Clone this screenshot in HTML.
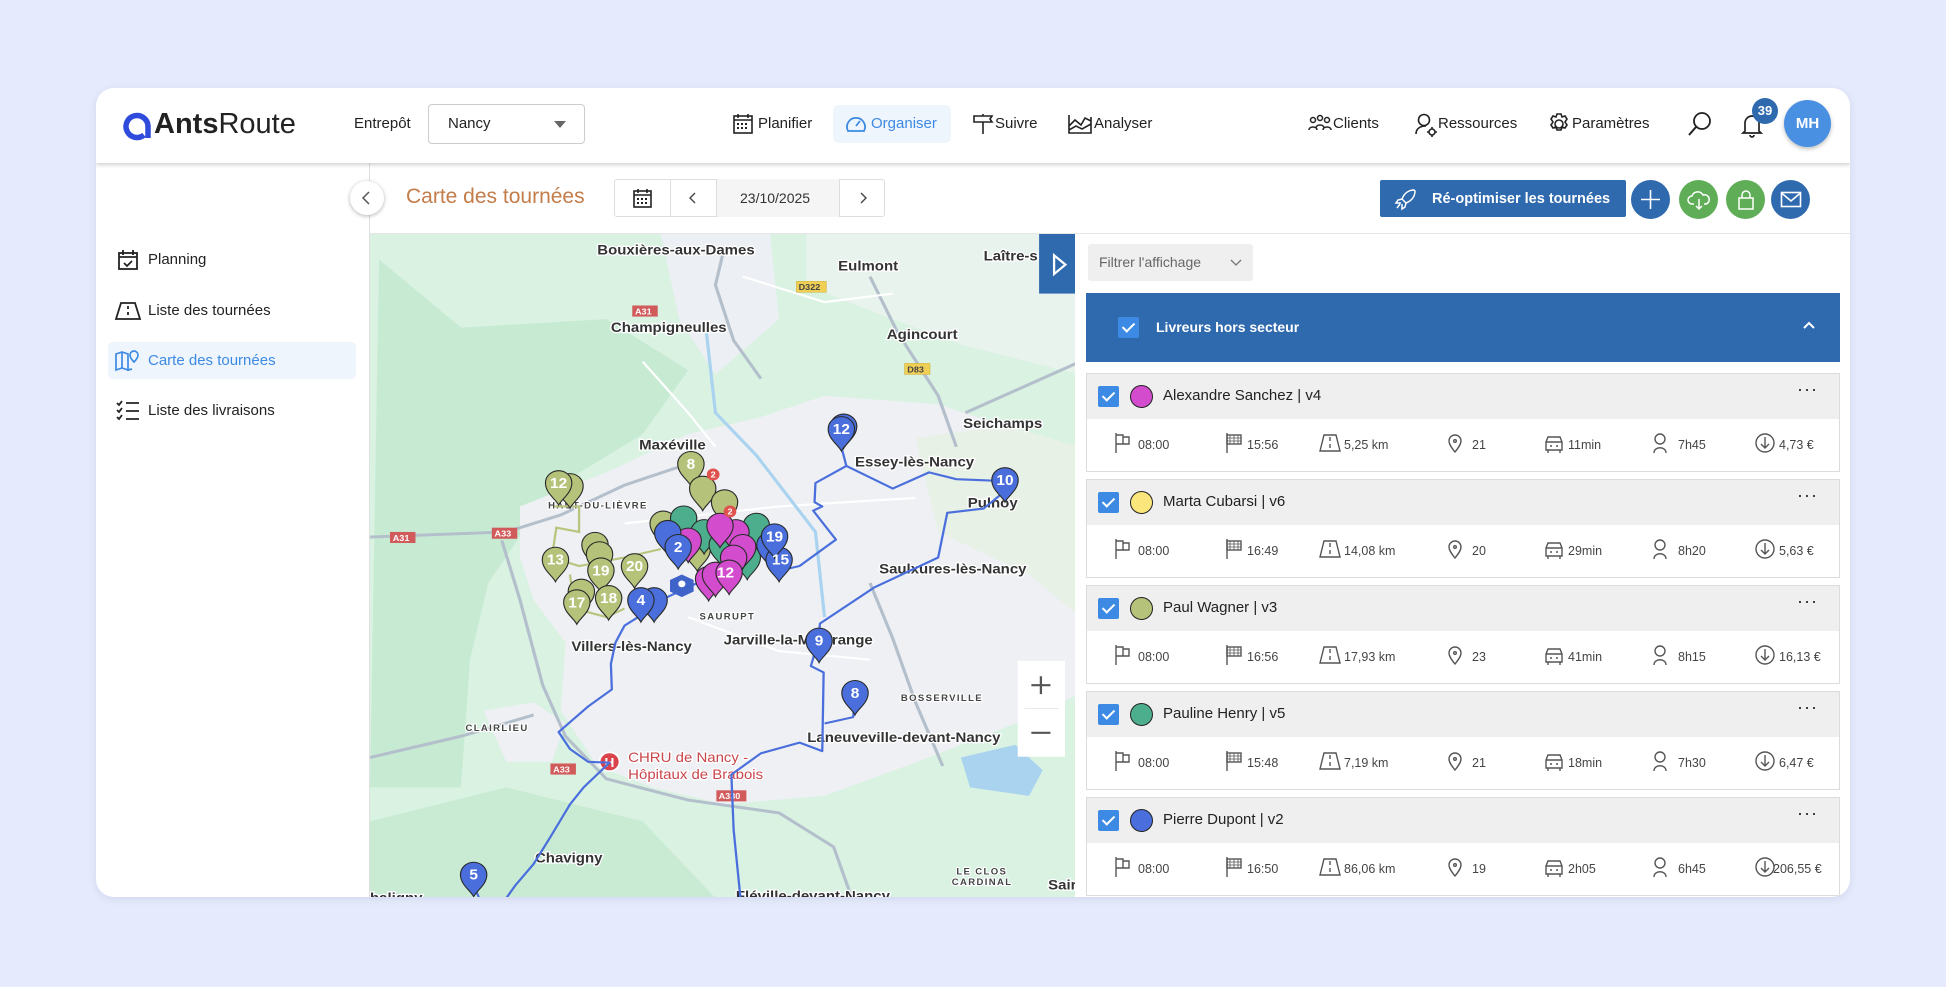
<!DOCTYPE html>
<html><head><meta charset="utf-8"><style>
*{box-sizing:border-box;margin:0;padding:0}
body{width:1946px;height:987px;background:#e5eafc;font-family:"Liberation Sans",sans-serif;color:#222;position:relative;overflow:hidden}
.abs{position:absolute}
.card{position:absolute;left:96px;top:88px;width:1754px;height:809px;background:#fff;border-radius:18px;overflow:hidden;box-shadow:0 2px 8px rgba(80,90,140,.12)}
.hdr{position:absolute;left:0;top:0;width:1754px;height:75px;background:#fff;box-shadow:0 2px 4px rgba(0,0,0,.18);z-index:5}
.t{position:absolute;white-space:nowrap}
.nav{font-size:15px;color:#222}
.side{font-size:15px;color:#222}
.rc{position:absolute;left:990px;width:754px;height:99px;border:1px solid #dcdcdc;background:#fff}
.rch{height:45px;background:#efefef;position:relative}
.cb{position:absolute;width:21px;height:21px;background:#3d8ae4;border-radius:2px}
.cb:after{content:"";position:absolute;left:7px;top:3px;width:5px;height:10px;border:solid #fff;border-width:0 2px 2px 0;transform:rotate(45deg)}
.st{position:absolute;top:64px;font-size:12.5px;color:#444;white-space:nowrap}
.circ{position:absolute;width:39px;height:39px;border-radius:50%;top:92px}
</style></head><body>
<div class="card">
 <div class="hdr">
  <svg class="abs" style="left:26px;top:23px" width="30" height="30" viewBox="0 0 30 30"><path d="M22 24 A11 11 0 1 1 26 15 L26 27" fill="none" stroke="#2e4bdc" stroke-width="5.5"/></svg>
  <div class="t" style="left:58px;top:20px;font-size:29px;color:#222"><b>Ants</b>Route</div>
  <div class="t nav" style="left:258px;top:27px">Entrepôt</div>
  <div class="abs" style="left:332px;top:16px;width:157px;height:40px;border:1px solid #ccc;border-radius:4px"></div>
  <div class="t nav" style="left:352px;top:27px">Nancy</div>
  <div class="abs" style="left:458px;top:33px;width:0;height:0;border-left:6px solid transparent;border-right:6px solid transparent;border-top:7px solid #666"></div>
  <svg class="abs" style="left:637px;top:25px" width="20" height="21" viewBox="0 0 20 21"><rect x="1" y="3" width="18" height="17" fill="none" stroke="#222" stroke-width="1.6"/><path d="M1 7h18M5 1v4M15 1v4" stroke="#222" stroke-width="1.6"/><g fill="#222"><rect x="4" y="10" width="2" height="2"/><rect x="8" y="10" width="2" height="2"/><rect x="12" y="10" width="2" height="2"/><rect x="4" y="14" width="2" height="2"/><rect x="8" y="14" width="2" height="2"/><rect x="12" y="14" width="2" height="2"/></g></svg>
  <div class="t nav" style="left:662px;top:27px">Planifier</div>
  <div class="abs" style="left:737px;top:17px;width:118px;height:38px;background:#eef5fd;border-radius:5px"></div>
  <svg class="abs" style="left:749px;top:26px" width="22" height="20" viewBox="0 0 22 20"><path d="M3 17 A9 9 0 1 1 19 17 Z" fill="none" stroke="#3d8ae4" stroke-width="1.8"/><path d="M11 12 L15 7" stroke="#3d8ae4" stroke-width="1.8"/></svg>
  <div class="t nav" style="left:775px;top:27px;color:#3d8ae4">Organiser</div>
  <svg class="abs" style="left:876px;top:25px" width="22" height="22" viewBox="0 0 22 22"><path d="M2 3h18l-2 3 2 3H2z M11 9v12 M11 1v2" fill="none" stroke="#222" stroke-width="1.6"/></svg>
  <div class="t nav" style="left:899px;top:27px">Suivre</div>
  <svg class="abs" style="left:972px;top:26px" width="24" height="20" viewBox="0 0 24 20"><path d="M1 1v18h22V3 M1 12l6-6 6 5 4-7 6 3 M1 16l7-4 6 3 9-5" fill="none" stroke="#222" stroke-width="1.6"/></svg>
  <div class="t nav" style="left:998px;top:27px">Analyser</div>
  <svg class="abs" style="left:1212px;top:26px" width="24" height="20" viewBox="0 0 24 20"><g fill="none" stroke="#222" stroke-width="1.5"><circle cx="5" cy="6" r="2.5"/><circle cx="12" cy="4" r="2.5"/><circle cx="19" cy="6" r="2.5"/><path d="M1 16c0-4 8-4 8 0M8 14c0-4 8-4 8 0M15 16c0-4 8-4 8 0"/></g></svg>
  <div class="t nav" style="left:1237px;top:27px">Clients</div>
  <svg class="abs" style="left:1318px;top:24px" width="26" height="26" viewBox="0 0 26 26"><g fill="none" stroke="#222" stroke-width="1.6"><circle cx="10" cy="8" r="5.5"/><path d="M2 22c0-6 5-8 10-8"/><circle cx="18" cy="20" r="3"/><path d="M18 15v2M18 23v2M13 20h2M21 20h2"/></g></svg>
  <div class="t nav" style="left:1342px;top:27px">Ressources</div>
  <svg class="abs" style="left:1451px;top:24px" width="24" height="24" viewBox="0 0 24 24"><g fill="none" stroke="#222" stroke-width="1.6"><circle cx="12" cy="12" r="4"/><path d="M10 2h4l1 3 3-1 2 3-2 3 2 3-2 3-3-1-1 3h-4l-1-3-3 1-2-3 2-3-2-3 2-3 3 1z"/></g></svg>
  <div class="t nav" style="left:1476px;top:27px">Paramètres</div>
  <svg class="abs" style="left:1591px;top:23px" width="26" height="26" viewBox="0 0 26 26"><circle cx="15" cy="10" r="8" fill="none" stroke="#222" stroke-width="1.8"/><path d="M9 16 L2 24" stroke="#222" stroke-width="2"/></svg>
  <svg class="abs" style="left:1645px;top:23px" width="22" height="28" viewBox="0 0 22 28"><path d="M4 20V12a7 7 0 0 1 14 0v8l2 2H2z M9 24a2 2 0 0 0 4 0" fill="none" stroke="#222" stroke-width="1.7"/></svg>
  <div class="abs" style="left:1656px;top:10px;width:26px;height:26px;border-radius:50%;background:#2f69ae;color:#fff;font-size:13px;font-weight:bold;text-align:center;line-height:26px">39</div>
  <div class="abs" style="left:1688px;top:12px;width:47px;height:47px;border-radius:50%;background:#4a90e2;color:#fff;font-size:15px;font-weight:bold;text-align:center;line-height:47px;box-shadow:0 2px 4px rgba(0,0,0,.25)">MH</div>
 </div>
 <div class="abs" style="left:273px;top:75px;width:1px;height:734px;background:#e0e0e0"></div>
 <svg class="abs" style="left:21px;top:161px" width="22" height="22" viewBox="0 0 22 22"><rect x="2" y="4" width="18" height="16" fill="none" stroke="#222" stroke-width="1.8"/><path d="M2 8h18M6 1v5M16 1v5M7 14l3 3 5-5" fill="none" stroke="#222" stroke-width="1.8"/></svg>
 <div class="t side" style="left:52px;top:163px">Planning</div>
 <svg class="abs" style="left:18px;top:213px" width="28" height="20" viewBox="0 0 28 20"><path d="M7 2h14l5 16H2z M14 5v3M14 11v3" fill="none" stroke="#222" stroke-width="1.8"/></svg>
 <div class="t side" style="left:52px;top:214px">Liste des tournées</div>
 <div class="abs" style="left:12px;top:254px;width:248px;height:37px;background:#eef5fd;border-radius:5px"></div>
 <svg class="abs" style="left:18px;top:261px" width="26" height="24" viewBox="0 0 26 24"><path d="M2 5l6-2 6 2 0 16-6-2-6 2z M8 3v16 M14 8v13l4-1" fill="none" stroke="#3d8ae4" stroke-width="1.7"/><path d="M20 13c-3-3-4-5-4-7a4 4 0 0 1 8 0c0 2-1 4-4 7z" fill="none" stroke="#3d8ae4" stroke-width="1.7"/></svg>
 <div class="t side" style="left:52px;top:264px;color:#3d8ae4">Carte des tournées</div>
 <svg class="abs" style="left:20px;top:312px" width="24" height="22" viewBox="0 0 24 22"><path d="M1 3l2 2 3-4M1 10l2 2 3-4M1 17l2 2 3-4 M10 3h13M10 11h13M10 19h13" fill="none" stroke="#222" stroke-width="1.8"/></svg>
 <div class="t side" style="left:52px;top:314px">Liste des livraisons</div>
 <div class="abs" style="left:254px;top:93px;width:34px;height:34px;border-radius:50%;background:#fff;box-shadow:0 1px 4px rgba(0,0,0,.3);z-index:3"></div>
 <svg class="abs" style="left:264px;top:102px;z-index:4" width="12" height="16" viewBox="0 0 12 16"><path d="M9 2L3 8l6 6" fill="none" stroke="#555" stroke-width="1.5"/></svg>
 <div class="t" style="left:310px;top:97px;font-size:21px;color:#c47d4a">Carte des tournées</div>
 <div class="abs" style="left:518px;top:91px;width:271px;height:38px;border:1px solid #ddd;border-radius:3px;background:#fff"></div>
 <div class="abs" style="left:574px;top:91px;width:1px;height:38px;background:#ddd"></div>
 <div class="abs" style="left:620px;top:91px;width:124px;height:38px;background:#f5f5f5;border-left:1px solid #ddd;border-right:1px solid #ddd"></div>
 <svg class="abs" style="left:537px;top:100px" width="19" height="20" viewBox="0 0 19 20"><rect x="1" y="3" width="17" height="16" fill="none" stroke="#222" stroke-width="1.6"/><path d="M1 7h17M5 1v4M14 1v4" stroke="#222" stroke-width="1.6"/><g fill="#222"><rect x="4" y="10" width="2" height="2"/><rect x="8" y="10" width="2" height="2"/><rect x="12" y="10" width="2" height="2"/><rect x="4" y="14" width="2" height="2"/><rect x="8" y="14" width="2" height="2"/><rect x="12" y="14" width="2" height="2"/></g></svg>
 <svg class="abs" style="left:592px;top:104px" width="10" height="12" viewBox="0 0 10 12"><path d="M7 1L2 6l5 5" fill="none" stroke="#444" stroke-width="1.4"/></svg>
 <div class="t" style="left:644px;top:102px;font-size:14px;color:#333">23/10/2025</div>
 <svg class="abs" style="left:762px;top:104px" width="10" height="12" viewBox="0 0 10 12"><path d="M3 1l5 5-5 5" fill="none" stroke="#444" stroke-width="1.4"/></svg>
 <div class="abs" style="left:1284px;top:92px;width:246px;height:37px;background:#2f69ae;border-radius:2px"></div>
 <svg class="abs" style="left:1298px;top:99px" width="24" height="24" viewBox="0 0 24 24"><path d="M20 3c-6 0-10 4-12 9l4 4c5-2 9-6 9-12z M8 12l-4 1-2 3 5 0 M12 16l-1 4-3 2 0-5 M6 17l-3 4" fill="none" stroke="#fff" stroke-width="1.5"/></svg>
 <div class="t" style="left:1336px;top:103px;font-size:14.5px;color:#fff;font-weight:bold">Ré-optimiser les tournées</div>
 <div class="circ" style="left:1535px;background:#2f69ae"></div>
 <svg class="abs" style="left:1543px;top:100px" width="23" height="23" viewBox="0 0 23 23"><path d="M11.5 2v19M2 11.5h19" stroke="#fff" stroke-width="1.6"/></svg>
 <div class="circ" style="left:1583px;background:#5fae57"></div>
 <svg class="abs" style="left:1591px;top:101px" width="24" height="22" viewBox="0 0 24 22"><path d="M7 15H5a4 4 0 0 1 0-8 6 6 0 0 1 11-1 4.5 4.5 0 0 1 3 9h-2 M12 10v10M9 17l3 3 3-3" fill="none" stroke="#fff" stroke-width="1.5"/></svg>
 <div class="circ" style="left:1630px;background:#5fae57"></div>
 <svg class="abs" style="left:1640px;top:101px" width="20" height="22" viewBox="0 0 20 22"><rect x="3" y="9" width="14" height="11" fill="none" stroke="#fff" stroke-width="1.5"/><path d="M6 9V6a4 4 0 0 1 8 0v3" fill="none" stroke="#fff" stroke-width="1.5"/></svg>
 <div class="circ" style="left:1675px;background:#2f69ae"></div>
 <svg class="abs" style="left:1684px;top:103px" width="22" height="17" viewBox="0 0 22 17"><rect x="1.5" y="1.5" width="19" height="14" fill="none" stroke="#fff" stroke-width="1.6"/><path d="M1.5 2l9.5 8 9.5-8" fill="none" stroke="#fff" stroke-width="1.6"/></svg>
 <div class="abs" style="left:274px;top:145px;width:1480px;height:1px;background:#e6e6e6"></div>

 <div class="abs" style="left:274px;top:146px;width:705px;height:663px;overflow:hidden;background:#d8f1e0">
 <svg width="710" height="664" viewBox="0 0 1562 1560" preserveAspectRatio="none" style="position:absolute;left:0;top:0" font-family="Liberation Sans, sans-serif">
  <defs>
   <path id="pin" d="M0 52 C-6 38 -29 24 -29 0 A29 29 0 1 1 29 0 C29 24 6 38 0 52Z"/>
  </defs>
  <path d="M0 0 H1562 V1560 H0Z" fill="#d9f2e2"/>
  <path d="M20 60 L200 220 L520 200 L700 320 L600 470 L400 600 L260 820 L220 1000 L200 1300 L0 1300Z" fill="#c7ead3"/>
  <path d="M0 1380 L300 1300 L600 1380 L760 1560 L0 1560Z" fill="#c9ebd4"/>
  <path d="M640 0 L880 0 L900 200 L760 330 L680 200Z" fill="#eceff3"/>
  <path d="M960 0 L1562 0 L1562 330 L1300 260 L1100 180 L960 120Z" fill="#e9f3ee"/>
  <path d="M330 640 L520 560 L700 470 L860 430 L1000 380 L1250 400 L1450 470 L1562 520 L1562 1080 L1420 1150 L1230 1230 L1000 1320 L780 1340 L620 1300 L500 1250 L420 1120 L430 960 L360 860 L330 760Z" fill="#eef0f4"/>
  <path d="M1200 480 L1400 450 L1562 500 L1562 900 L1450 800 L1250 700Z" fill="#e8f1e6"/>
  <path d="M250 1120 L360 1100 L430 1150 L400 1240 L300 1240Z" fill="#eef0f4"/>
  <path d="M1300 1230 L1420 1200 L1480 1260 L1450 1320 L1320 1300Z" fill="#a9d3ef"/>
  <g fill="none" stroke="#b4bfcc" stroke-width="7">
   <path d="M0 712 L300 700 L420 660 L560 590 L700 540"/>
   <path d="M290 720 L330 860 L380 1060 L430 1180 L520 1280 L700 1330 L900 1360 L1020 1440 L1060 1560"/>
   <path d="M780 30 L760 120 L800 250 L860 340"/>
   <path d="M1100 100 L1160 230 L1250 380 L1290 500"/>
   <path d="M1310 420 L1562 300"/>
   <path d="M1100 820 L1150 950 L1200 1100 L1260 1250"/>
   <path d="M0 1230 L200 1180 L360 1130"/>
  </g>
  <g fill="none" stroke="#fff" stroke-width="5">
   <path d="M560 680 L900 640 L1200 620"/>
   <path d="M700 900 L900 980 L1100 1000"/>
   <path d="M820 100 L1000 160 L1150 140"/>
   <path d="M600 300 L700 420 L760 500"/>
  </g>
  <path d="M740 230 L760 420 L850 520 L980 700 L1000 900" fill="none" stroke="#a9d3ef" stroke-width="7"/>
  <g font-size="20" font-weight="bold" fill="#fff">
   <rect x="577" y="168" width="56" height="26" fill="#d15a5a"/><text x="583" y="189">A31</text>
   <rect x="44" y="700" width="56" height="26" fill="#d15a5a"/><text x="50" y="721">A31</text>
   <rect x="268" y="690" width="56" height="26" fill="#d15a5a"/><text x="274" y="711">A33</text>
   <rect x="397" y="1244" width="56" height="26" fill="#d15a5a"/><text x="403" y="1265">A33</text>
   <rect x="762" y="1307" width="66" height="26" fill="#d15a5a"/><text x="767" y="1328">A330</text>
   <rect x="938" y="111" width="66" height="26" fill="#f0cf55" stroke="#c9a830"/><text x="943" y="132" fill="#444">D322</text>
   <rect x="1176" y="304" width="56" height="26" fill="#f0cf55" stroke="#c9a830"/><text x="1182" y="325" fill="#444">D83</text>
  </g>
  <g font-size="33" fill="#333" stroke="#fff" stroke-width="6" paint-order="stroke" font-weight="600">
   <text x="500" y="48">Bouxières-aux-Dames</text>
   <text x="1030" y="86">Eulmont</text>
   <text x="1350" y="62">Laître-s</text>
   <text x="530" y="230">Champigneulles</text>
   <text x="1137" y="247">Agincourt</text>
   <text x="1305" y="456">Seichamps</text>
   <text x="592" y="506">Maxéville</text>
   <text x="1067" y="546">Essey-lès-Nancy</text>
   <text x="1315" y="642">Pulnoy</text>
   <text x="1120" y="798">Saulxures-lès-Nancy</text>
   <text x="443" y="980">Villers-lès-Nancy</text>
   <text x="778" y="965">Jarville-la-Malgrange</text>
   <text x="962" y="1194">Laneuveville-devant-Nancy</text>
   <text x="363" y="1477">Chavigny</text>
   <text x="805" y="1566">Fléville-devant-Nancy</text>
   <text x="1492" y="1540">Sair</text>
   <text x="0" y="1570">haligny</text>
  </g>
  <g font-size="21" fill="#444" stroke="#fff" stroke-width="5" paint-order="stroke" letter-spacing="3" font-weight="600">
   <text x="392" y="645">HAUT-DU-LIÈVRE</text>
   <text x="725" y="906">SAURUPT</text>
   <text x="1168" y="1097">BOSSERVILLE</text>
   <text x="210" y="1168">CLAIRLIEU</text>
   <text x="1290" y="1505">LE CLOS</text>
   <text x="1280" y="1530">CARDINAL</text>
  </g>
  <g font-size="33" fill="#c9464b" stroke="#fff" stroke-width="6" paint-order="stroke">
   <text x="568" y="1240">CHRU de Nancy -</text>
   <text x="568" y="1280">Hôpitaux de Brabois</text>
  </g>
  <circle cx="527" cy="1240" r="22" fill="#d9434b" stroke="#fff" stroke-width="4"/>
  <text x="516" y="1252" font-size="30" font-weight="bold" fill="#fff">H</text>
  <path d="M405 640 L460 640 L460 700 L410 690 L400 760 L460 780 L560 760 L640 740 M440 800 L450 880 L520 900 L560 880" fill="none" stroke="#b9c47e" stroke-width="5"/>
  <g fill="none" stroke="#4a6fdc" stroke-width="5" stroke-linejoin="round">
   <path d="M1037 500 L1048 545 L1100 572 L1150 598 L1230 560 L1290 576 L1380 580 M1048 545 L980 585 L978 630 L995 640 L975 650 L1025 718 L945 780 L905 790 L880 790"/>
   <path d="M1390 610 L1350 645 L1270 655 L1250 760 L1110 830 L990 915 L985 960 L970 1015 L998 1030 L995 1215 L945 1195 L860 1220 L795 1270 L800 1400 L815 1560"/>
   <path d="M1065 1110 L1063 1135 L1000 1150"/>
   <path d="M620 880 L560 920 L540 960 L530 1010 L532 1070 L480 1110 L415 1170 L440 1210 L480 1240 L527 1242 L470 1300 L440 1340 L395 1420 L360 1480 L320 1530 L300 1560"/>
   <path d="M640 860 L720 820 L800 790"/>
   <path d="M228 1530 L240 1560"/>
  </g>
  <g stroke="#2a2a2a" stroke-width="2.5">
   <g fill="#b5c27a">
    <use href="#pin" x="440" y="592"/><use href="#pin" x="415" y="585"/>
    <use href="#pin" x="408" y="765"/><use href="#pin" x="495" y="730"/><use href="#pin" x="505" y="752"/>
    <use href="#pin" x="508" y="790"/><use href="#pin" x="582" y="780"/>
    <use href="#pin" x="465" y="840"/><use href="#pin" x="455" y="865"/><use href="#pin" x="525" y="855"/>
    <use href="#pin" x="706" y="540"/><use href="#pin" x="732" y="598"/><use href="#pin" x="780" y="630"/><use href="#pin" x="645" y="680"/><use href="#pin" x="720" y="740"/>
   </g>
   <g fill="#4cae8c">
    <use href="#pin" x="690" y="668"/><use href="#pin" x="735" y="700"/><use href="#pin" x="850" y="685"/><use href="#pin" x="775" y="730"/><use href="#pin" x="830" y="760"/>
   </g>
   <g fill="#d34ccd">
    <use href="#pin" x="700" y="720"/><use href="#pin" x="805" y="700"/><use href="#pin" x="820" y="735"/><use href="#pin" x="800" y="760"/>
    <use href="#pin" x="745" y="810"/><use href="#pin" x="760" y="800"/><use href="#pin" x="790" y="795"/><use href="#pin" x="770" y="685"/>
   </g>
   <g fill="#4a6fdc">
    <use href="#pin" x="655" y="702"/><use href="#pin" x="678" y="735"/>
    <use href="#pin" x="625" y="860"/><use href="#pin" x="596" y="860"/>
    <use href="#pin" x="880" y="730"/><use href="#pin" x="900" y="765"/><use href="#pin" x="890" y="710"/>
    <use href="#pin" x="1042" y="452"/><use href="#pin" x="1037" y="458"/>
    <use href="#pin" x="1397" y="578"/><use href="#pin" x="988" y="955"/><use href="#pin" x="1067" y="1078"/><use href="#pin" x="228" y="1505"/>
   </g>
  </g>
  <path d="M686 800 L712 813 L712 840 L686 853 L660 840 L660 813Z" fill="#3f63c9"/>
  <circle cx="686" cy="822" r="8" fill="#fff"/>
  <g font-size="34" fill="#fff" font-weight="600" text-anchor="middle">
   <text x="415" y="597">12</text><text x="408" y="777">13</text><text x="508" y="802">19</text><text x="582" y="792">20</text>
   <text x="455" y="877">17</text><text x="525" y="867">18</text><text x="706" y="552">8</text>
   <text x="678" y="747">2</text><text x="596" y="872">4</text><text x="890" y="722">19</text><text x="903" y="777">15</text>
   <text x="1037" y="470">12</text><text x="1397" y="590">10</text><text x="988" y="967">9</text><text x="1067" y="1090">8</text><text x="228" y="1517">5</text>
   <text x="782" y="807">12</text>
  </g>
  <g fill="#e0524e"><circle cx="755" cy="565" r="14"/><circle cx="792" cy="652" r="14"/></g>
  <g font-size="20" fill="#fff" font-weight="bold" text-anchor="middle"><text x="755" y="572">2</text><text x="792" y="659">2</text></g>
  <rect x="1472" y="0" width="90" height="140" fill="#2f69ae"/>
  <path d="M1505 50 L1530 72 L1505 94Z" fill="none" stroke="#fff" stroke-width="5"/>
  <rect x="1425" y="1003" width="104" height="225" fill="#fff"/>
  <path d="M1440 1115 H1514" stroke="#e5e5e5" stroke-width="2"/>
  <path d="M1455 1060 H1497 M1476 1039 V1081 M1455 1172 H1497" stroke="#555" stroke-width="5"/>
 </svg>
 </div>

 <div class="abs" style="left:992px;top:156px;width:165px;height:37px;background:#efefef;border-radius:3px"></div>
 <div class="t" style="left:1003px;top:166px;font-size:14px;color:#666">Filtrer l'affichage</div>
 <svg class="abs" style="left:1134px;top:171px" width="12" height="8" viewBox="0 0 12 8"><path d="M1 1l5 5 5-5" fill="none" stroke="#777" stroke-width="1.3"/></svg>
 <div class="abs" style="left:990px;top:205px;width:754px;height:69px;background:#2f69ae"></div>
 <div class="cb" style="left:1022px;top:229px"></div>
 <div class="t" style="left:1060px;top:231px;font-size:14px;color:#fff;font-weight:bold">Livreurs hors secteur</div>
 <svg class="abs" style="left:1706px;top:232px" width="14" height="10" viewBox="0 0 14 10"><path d="M2 8l5-5 5 5" fill="none" stroke="#fff" stroke-width="2"/></svg>

 <div class="rc" style="top:285px">
  <div class="rch"><div class="cb" style="left:11px;top:12px"></div><div class="abs" style="left:43px;top:11px;width:23px;height:23px;border-radius:50%;background:#d34ccd;border:1.5px solid #222"></div><div class="t" style="left:76px;top:13px;font-size:15px">Alexandre Sanchez | v4</div><div class="t" style="left:710px;top:5px;font-size:18px;letter-spacing:1px">···</div></div>
  <div class="st" style="left:51px">08:00</div><div class="st" style="left:160px">15:56</div><div class="st" style="left:257px">5,25 km</div><div class="st" style="left:385px">21</div><div class="st" style="left:481px">11min</div><div class="st" style="left:591px">7h45</div><div class="st" style="left:692px">4,73 €</div>
 </div>
 <div class="rc" style="top:391px">
  <div class="rch"><div class="cb" style="left:11px;top:12px"></div><div class="abs" style="left:43px;top:11px;width:23px;height:23px;border-radius:50%;background:#fbe67c;border:1.5px solid #222"></div><div class="t" style="left:76px;top:13px;font-size:15px">Marta Cubarsi | v6</div><div class="t" style="left:710px;top:5px;font-size:18px;letter-spacing:1px">···</div></div>
  <div class="st" style="left:51px">08:00</div><div class="st" style="left:160px">16:49</div><div class="st" style="left:257px">14,08 km</div><div class="st" style="left:385px">20</div><div class="st" style="left:481px">29min</div><div class="st" style="left:591px">8h20</div><div class="st" style="left:692px">5,63 €</div>
 </div>
 <div class="rc" style="top:497px">
  <div class="rch"><div class="cb" style="left:11px;top:12px"></div><div class="abs" style="left:43px;top:11px;width:23px;height:23px;border-radius:50%;background:#b5c27a;border:1.5px solid #222"></div><div class="t" style="left:76px;top:13px;font-size:15px">Paul Wagner | v3</div><div class="t" style="left:710px;top:5px;font-size:18px;letter-spacing:1px">···</div></div>
  <div class="st" style="left:51px">08:00</div><div class="st" style="left:160px">16:56</div><div class="st" style="left:257px">17,93 km</div><div class="st" style="left:385px">23</div><div class="st" style="left:481px">41min</div><div class="st" style="left:591px">8h15</div><div class="st" style="left:692px">16,13 €</div>
 </div>
 <div class="rc" style="top:603px">
  <div class="rch"><div class="cb" style="left:11px;top:12px"></div><div class="abs" style="left:43px;top:11px;width:23px;height:23px;border-radius:50%;background:#4cae8c;border:1.5px solid #222"></div><div class="t" style="left:76px;top:13px;font-size:15px">Pauline Henry | v5</div><div class="t" style="left:710px;top:5px;font-size:18px;letter-spacing:1px">···</div></div>
  <div class="st" style="left:51px">08:00</div><div class="st" style="left:160px">15:48</div><div class="st" style="left:257px">7,19 km</div><div class="st" style="left:385px">21</div><div class="st" style="left:481px">18min</div><div class="st" style="left:591px">7h30</div><div class="st" style="left:692px">6,47 €</div>
 </div>
 <div class="rc" style="top:709px">
  <div class="rch"><div class="cb" style="left:11px;top:12px"></div><div class="abs" style="left:43px;top:11px;width:23px;height:23px;border-radius:50%;background:#4a6fdc;border:1.5px solid #222"></div><div class="t" style="left:76px;top:13px;font-size:15px">Pierre Dupont | v2</div><div class="t" style="left:710px;top:5px;font-size:18px;letter-spacing:1px">···</div></div>
  <div class="st" style="left:51px">08:00</div><div class="st" style="left:160px">16:50</div><div class="st" style="left:257px">86,06 km</div><div class="st" style="left:385px">19</div><div class="st" style="left:481px">2h05</div><div class="st" style="left:591px">6h45</div><div class="st" style="left:686px">206,55 €</div>
 </div>
</div>
<svg class="abs" style="left:0;top:0;pointer-events:none" width="1946" height="987">
 <defs>
  <g id="ic" fill="none" stroke="#555" stroke-width="1.4">
   <path d="M2 0v20 M2 2h7v9H2 M9 4h6v7H9"/>
   <g transform="translate(111,0)"><path d="M2 0v20"/><rect x="2" y="2" width="14" height="9"/><path d="M5 2v9M9 2v9M13 2v9M2 5h14M2 8h14" stroke-width=".8"/></g>
   <g transform="translate(205,0)"><path d="M5 2h12l4 16H1z M11 4v4M11 11v4"/></g>
   <g transform="translate(334,0)"><path d="M7 19c-4-5-6-8-6-11a6 6 0 0 1 12 0c0 3-2 6-6 11z"/><circle cx="7" cy="8" r="1.3"/></g>
   <g transform="translate(429,2)"><path d="M3 7l2-5h12l2 5v8H3z M3 7h16M5 15v3M17 15v3M7 11h2M13 11h2"/></g>
   <g transform="translate(539,0)"><circle cx="7" cy="6" r="5"/><path d="M1 20c0-7 12-7 12 0"/></g>
   <g transform="translate(641,0)"><circle cx="10" cy="10" r="9"/><path d="M10 4v11M6 11l4 4 4-4"/></g>
  </g>
 </defs>
 <use href="#ic" x="1114" y="433"/>
 <use href="#ic" x="1114" y="539"/>
 <use href="#ic" x="1114" y="645"/>
 <use href="#ic" x="1114" y="751"/>
 <use href="#ic" x="1114" y="857"/>
</svg>
</body></html>
